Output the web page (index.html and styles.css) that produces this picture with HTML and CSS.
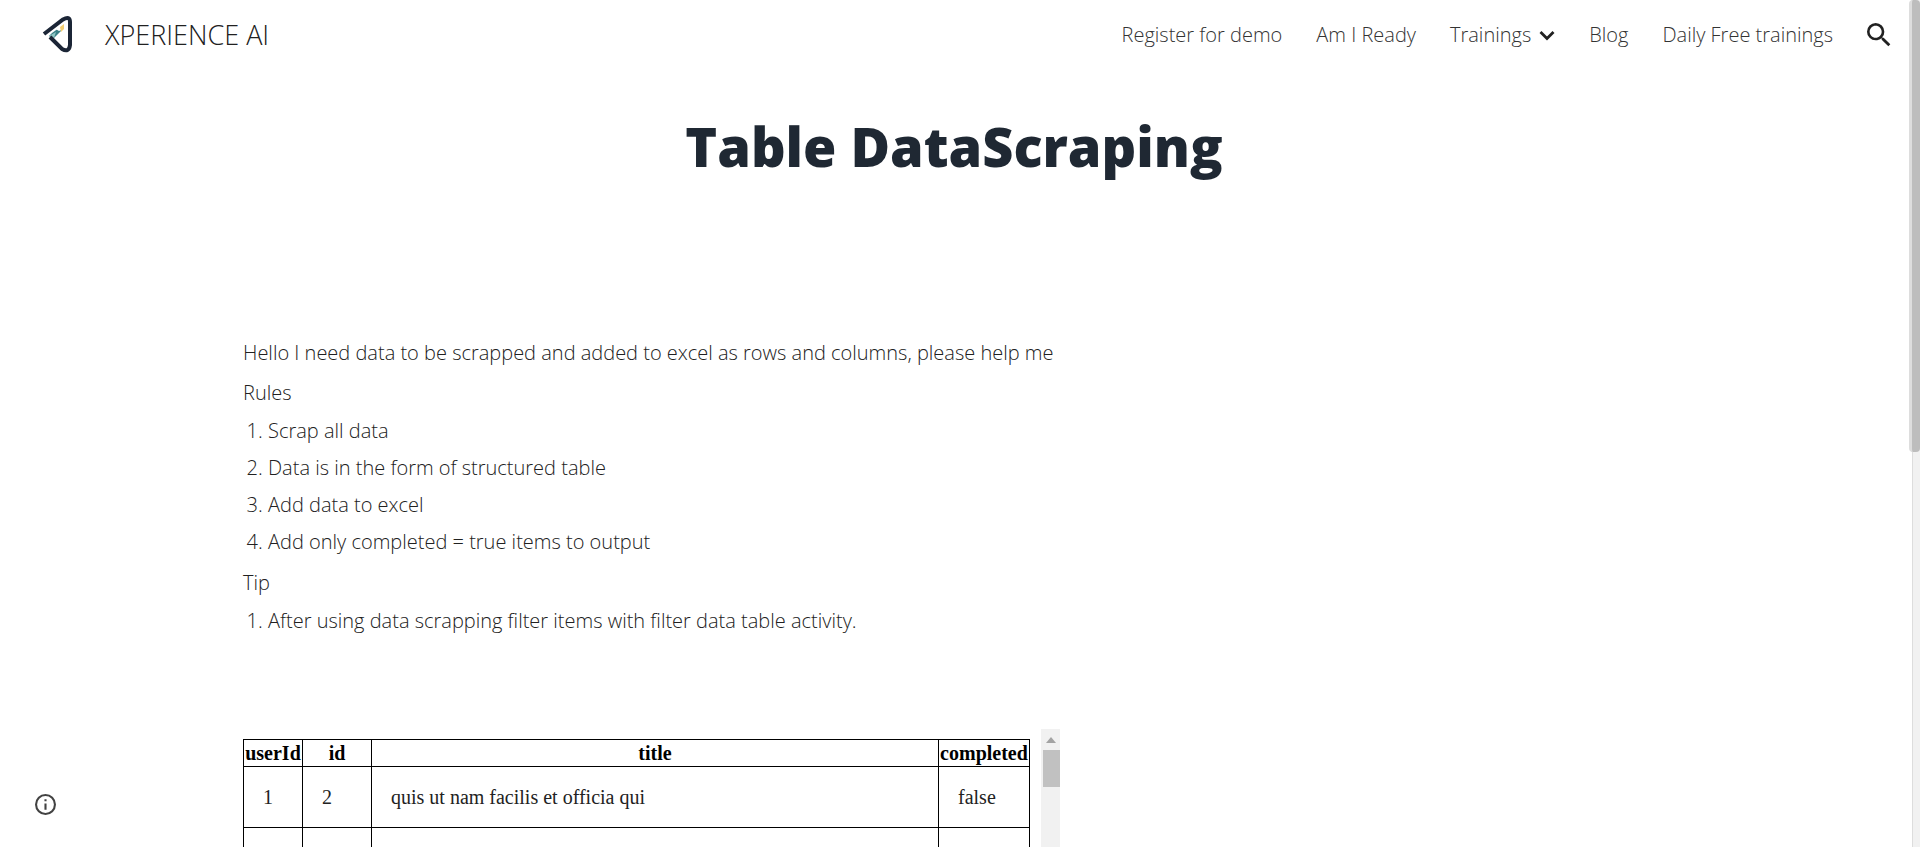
FILE: index.html
```html
<!DOCTYPE html>
<html lang="en">
<head>
<meta charset="utf-8">
<title>XPERIENCE AI - Table DataScraping</title>
<link rel="stylesheet" href="styles.css">
</head>
<body>
<header class="header">
  <a class="brand" href="#">
    <svg class="brand-logo" viewBox="0 0 34 40" aria-hidden="true">
      <path d="M11 18 22 10v4L12 24l-4-3z" fill="#397f86"/>
      <path d="M8 21 15 17l-2 6z" fill="#8fc5c3"/>
      <path d="M13 13 23 7v7l-5 2z" fill="#fff"/>
      <path d="M19 12l4-3v5l-3 3z" fill="#f4cf72"/>
      <path d="M3 19 22 4.500Q29 .5 29 7V30Q28 38 21 34L9 22" fill="none" stroke="#1b2536" stroke-width="4"/>
    </svg>
    <span>XPERIENCE AI</span>
  </a>
  <nav class="nav">
    <a href="#">Register for demo</a>
    <a href="#">Am I Ready</a>
    <a class="nav-menu" href="#">Trainings
      <svg class="chevron" viewBox="0 0 16 16" aria-hidden="true"><path d="M1.500 5 8 11.500 14.500 5" fill="none" stroke="#212121" stroke-width="2.800"/></svg>
    </a>
    <a href="#">Blog</a>
    <a href="#">Daily Free trainings</a>
    <button class="icon-button" type="button" aria-label="Search">
      <svg class="search" viewBox="3 3 18 18" aria-hidden="true"><path fill="#212121" d="M15.500 14h-.79l-.28-.27A6.471 6.471 0 0 0 16 9.500 6.500 6.500 0 1 0 9.500 16c1.610 0 3.090-.59 4.230-1.570l.27.28v.79l5 4.990L20.490 19l-4.990-5zm-6 0C7.010 14 5 11.990 5 9.500S7.010 5 9.500 5 14 7.010 14 9.500 11.990 14 9.500 14z"/></svg>
    </button>
  </nav>
</header>
<main class="main">
  <h1 class="title">Table DataScraping</h1>
  <section class="content">
    <p>Hello I need data to be scrapped and added to excel as rows and columns, please help me</p>
    <p>Rules</p>
    <ol>
      <li>Scrap all data</li>
      <li>Data is in the form of structured table</li>
      <li>Add data to excel</li>
      <li>Add only completed = true items to output</li>
    </ol>
    <p>Tip</p>
    <ol>
      <li>After using data scrapping filter items with filter data table activity.</li>
    </ol>
  </section>
  <section class="frame">
    <div class="frame-view">
      <table class="data">
        <colgroup><col class="col-user"><col class="col-id"><col><col class="col-done"></colgroup>
        <thead><tr><th>userId</th><th>id</th><th>title</th><th>completed</th></tr></thead>
        <tbody>
          <tr><td>1</td><td>2</td><td>quis ut nam facilis et officia qui</td><td>false</td></tr>
          <tr><td></td><td></td><td></td><td></td></tr>
        </tbody>
      </table>
    </div>
    <div class="frame-bar">
      <svg class="arrow" viewBox="0 0 10 6" aria-hidden="true"><path d="M0 6 5 0l5 6z" fill="#a3a3a3"/></svg>
      <div class="frame-thumb"></div>
    </div>
  </section>
</main>
<button class="icon-button info" type="button" aria-label="Site information">
  <svg viewBox="2 2 20 20" aria-hidden="true"><path fill="#424242" d="M11 7h2v2h-2zm0 4h2v6h-2zm1-9a10 10 0 1 0 0 20 10 10 0 0 0 0-20zm0 18a8 8 0 1 1 0-16 8 8 0 0 1 0 16z"/></svg>
</button>
<div class="page-bar"><div class="page-thumb"></div></div>
</body>
</html>
```
FILE: styles.css
```css
* { box-sizing: border-box; }
body {
  display: flex;
  flex-direction: column;
  margin: 0;
  height: 100vh;
  overflow: hidden;
  background: #fff;
  color: #212121;
  font: 300 20px/28px "Open Sans", "Noto Sans", sans-serif;
}
a { color: inherit; text-decoration: none; }
.header {
  display: flex;
  flex: none;
  align-items: center;
  justify-content: space-between;
  height: 70px;
  padding: 0 29px 0 41px;
}
.brand { display: flex; align-items: center; gap: 30px; font-size: 27px; }
.brand-logo { width: 34px; height: 40px; }
.nav { display: flex; align-items: center; gap: 34px; color: #333; }
.nav-menu { display: flex; align-items: center; gap: 8px; }
.chevron { width: 16px; height: 16px; }
.icon-button { display: flex; padding: 0; border: 0; background: none; }
.search { width: 24px; height: 24px; }
.main {
  display: flex;
  flex: 1;
  flex-direction: column;
  min-height: 0;
}
.title {
  margin: 0;
  padding: 36px 12px 0 0;
  color: #1f2833;
  font-size: 54px;
  font-weight: 800;
  line-height: 80px;
  text-align: center;
}
.content { padding: 153px 243px 0; }
.content p { margin: 0 0 12px; }
.content ol { margin: -2px 0 13px; padding-left: 25px; }
.content li + li { margin-top: 9px; }
.frame {
  display: flex;
  flex: 1;
  min-height: 0;
  width: 817px;
  max-width: 100%;
  margin: 81px 0 0 243px;
}
.frame-view {
  flex: 1;
  overflow: hidden;
  padding: 10px 11px 0 0;
}
.data {
  width: 100%;
  border-collapse: collapse;
  table-layout: fixed;
  color: #000;
  font: 400 20px/24px "Liberation Serif", serif;
}
.data th, .data td { border: 1px solid #000; }
.data th { padding: 1px; }
.data td { height: 61px; padding: 0 19px; color: #222; }
.col-user { width: 59px; }
.col-id { width: 69px; }
.col-done { width: 91px; }
.frame-bar {
  display: flex;
  flex-direction: column;
  width: 19px;
  background: #f1f1f1;
}
.arrow { width: 10px; height: 6px; margin: 8px auto 7px; }
.frame-thumb { height: 37px; margin-left: 2px; background: #c1c1c1; }
.info { position: fixed; left: 35px; bottom: 32px; }
.info svg { width: 21px; height: 21px; }
.page-bar {
  position: fixed;
  inset: 0 0 0 auto;
  width: 8px;
  border-left: 1px solid #ddd;
  background: #f1f1f1;
}
.page-thumb {
  height: 53.4%;
  margin-left: -4px;
  border-left: 3px solid #ddd;
  border-radius: 4px;
  background: #bdbdbd;
}
```
